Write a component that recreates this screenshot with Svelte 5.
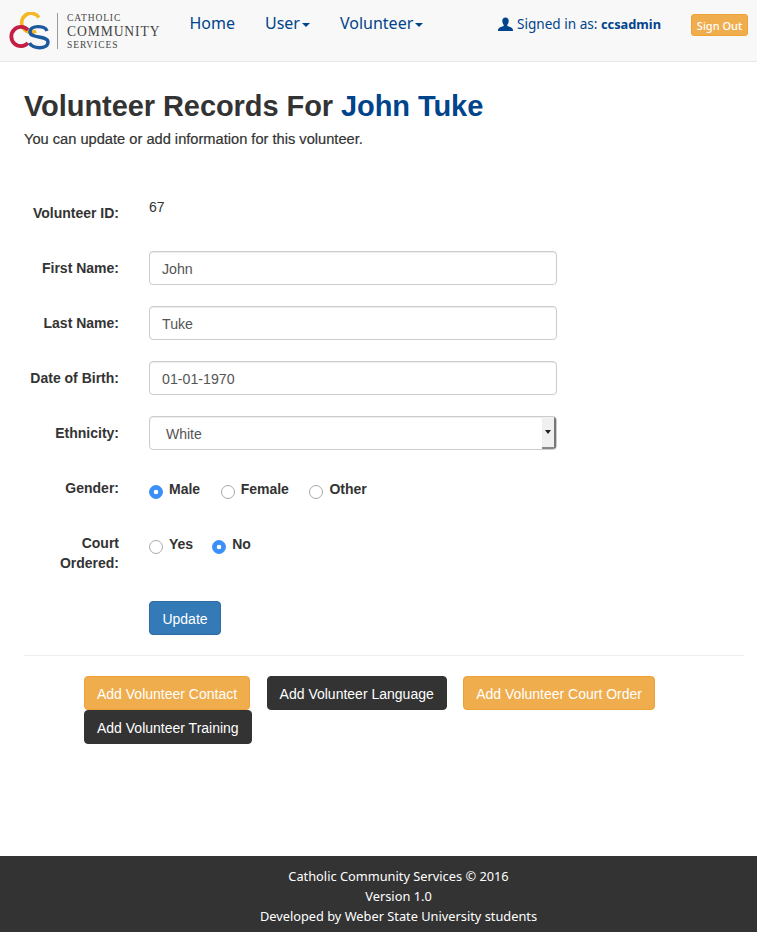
<script>
    const navLinks = [
        { label: "Home", caret: false },
        { label: "User", caret: true },
        { label: "Volunteer", caret: true },
    ];
    const actions = [
        { label: "Add Volunteer Contact", tone: "warn" },
        { label: "Add Volunteer Language", tone: "dark" },
        { label: "Add Volunteer Court Order", tone: "warn" },
        { label: "Add Volunteer Training", tone: "dark" },
    ];
    const textFields = [
        { label: "First Name:", value: "John" },
        { label: "Last Name:", value: "Tuke" },
        { label: "Date of Birth:", value: "01-01-1970" },
    ];
    let gender = $state("Male");
    let court = $state("No");
</script>

<nav class="navbar">
    <a class="brand" href="#/">
        <svg class="mark" width="42" height="38" viewBox="8 12 42 38" aria-hidden="true">
            <path d="M39 17.5A9.5 9.5 0 1 0 36 31" fill="none" stroke="#f5b823" stroke-width="3.6" />
            <path d="M28 30A9.6 9.6 0 1 0 28 43" fill="none" stroke="#c41e45" stroke-width="3.8" />
            <path d="M47 31C45 25 30 25 30 32C30 39 48 35 48 42C48 50 32 49 29.5 43" fill="none" stroke="#1c5a9e" stroke-width="3.4" />
        </svg>
        <span class="rule"></span>
        <span class="wordmark">
            <span class="small">Catholic</span>
            <span class="big">Community</span>
            <span class="small">Services</span>
        </span>
    </a>
    <ul class="links">
        {#each navLinks as link (link.label)}
            <li><a href="#/">{link.label}{#if link.caret}<span class="caret"></span>{/if}</a></li>
        {/each}
    </ul>
    <span class="signed">
        <svg width="15" height="15" viewBox="0 0 15 15" aria-hidden="true">
            <path d="M7.5 0.5C5.3 0.5 4.2 2.2 4.3 4.2C4.4 5.8 5 7 5.7 7.8C5.9 8.5 5.6 9 5 9.3C3.2 10 1 10.6 0.3 12C0 12.8 0 13.5 0 14H15C15 13.5 15 12.8 14.7 12C14 10.6 11.8 10 10 9.3C9.4 9 9.1 8.5 9.3 7.8C10 7 10.6 5.8 10.7 4.2C10.8 2.2 9.7 0.5 7.5 0.5Z" fill="#00448b" />
        </svg>
        <span>Signed in as: <b>ccsadmin</b></span>
    </span>
    <button class="signout">Sign Out</button>
</nav>

<main>
    <h1>Volunteer Records For <span class="who">John Tuke</span></h1>
    <p class="lead">You can update or add information for this volunteer.</p>

    <form class="form" onsubmit={(e) => e.preventDefault()}>
        <div class="row">
            <span class="label">Volunteer ID:</span>
            <span class="static">67</span>
        </div>
        {#each textFields as field (field.label)}
            <div class="row">
                <span class="label">{field.label}</span>
                <input class="control" type="text" value={field.value} />
            </div>
        {/each}
        <div class="row">
            <span class="label">Ethnicity:</span>
            <div class="control select">
                <span>White</span>
                <span class="stepper"><i></i></span>
            </div>
        </div>
        <div class="row">
            <span class="label">Gender:</span>
            <div class="radios">
                {#each ["Male", "Female", "Other"] as opt (opt)}
                    <label><input type="radio" bind:group={gender} value={opt} /><b>{opt}</b></label>
                {/each}
            </div>
        </div>
        <div class="row">
            <span class="label">Court Ordered:</span>
            <div class="radios court">
                {#each ["Yes", "No"] as opt (opt)}
                    <label><input type="radio" bind:group={court} value={opt} /><b>{opt}</b></label>
                {/each}
            </div>
        </div>
        <div class="row submit">
            <span class="label"></span>
            <button class="btn primary">Update</button>
        </div>
    </form>

    <hr />

    <div class="actions">
        {#each actions as action (action.label)}
            <button class="btn {action.tone}">{action.label}</button>
        {/each}
    </div>
</main>

<footer>
    <p>Catholic Community Services © 2016</p>
    <p>Version 1.0</p>
    <p>Developed by Weber State University students</p>
</footer>

<style>
    :global(body) {
        background: #fff;
        color: #333;
        font-family: "Liberation Sans", Arial, sans-serif;
        font-size: 14px;
    }
    .navbar {
        display: flex;
        align-items: flex-start;
        height: 61px;
        background: #f8f8f8;
        border-bottom: 1px solid #e7e7e7;
        font-family: "Noto Sans", sans-serif;
    }
    .brand {
        display: flex;
        align-items: center;
        margin: 12px 0 0 8px;
        height: 38px;
        text-decoration: none;
    }
    .rule {
        width: 1px;
        height: 36px;
        margin-left: 7px;
        background: #999;
    }
    .wordmark {
        display: flex;
        flex-direction: column;
        margin-left: 9px;
        font-family: "Liberation Serif", serif;
        color: #444;
        text-transform: uppercase;
    }
    .small {
        font-size: 9.5px;
        line-height: 12px;
        letter-spacing: 0.9px;
    }
    .big {
        font-size: 13.6px;
        line-height: 15px;
        letter-spacing: 0.9px;
    }
    .links {
        display: flex;
        list-style: none;
        gap: 30px;
        margin: 0 0 0 29px;
        padding: 13px 0 0;
    }
    .links a {
        color: #00448b;
        font-size: 16px;
        line-height: 21px;
        text-decoration: none;
    }
    .caret {
        display: inline-block;
        margin-left: 2px;
        vertical-align: middle;
        border-top: 4px solid #00448b;
        border-left: 4px solid transparent;
        border-right: 4px solid transparent;
    }
    .signed {
        display: flex;
        align-items: center;
        gap: 4px;
        margin: 14px 0 0 auto;
        color: #00448b;
        font-size: 13.6px;
        line-height: 19px;
    }
    .signed b {
        font-size: 12.8px;
    }
    .signout {
        margin: 14px 9px 0 30px;
        height: 22px;
        width: 57px;
        padding: 0;
        background: #f0ad4e;
        border: 1px solid #eea236;
        border-radius: 3px;
        color: #fff;
        font-family: "Noto Sans", sans-serif;
        font-size: 11px;
        font-weight: 500;
    }
    main {
        padding: 0 13px 0 24px;
        height: 794px;
        box-sizing: border-box;
    }
    h1 {
        margin: 0;
        padding-top: 28px;
        font-size: 29px;
        line-height: 33px;
        font-weight: bold;
        letter-spacing: -0.07px;
        color: #333;
    }
    .who {
        color: #00448b;
    }
    .lead {
        margin: 6px 0 0;
        font-size: 14.65px;
        line-height: 20px;
        -webkit-text-stroke: 0.2px #333;
    }
    .form {
        display: flex;
        flex-direction: column;
        gap: 21px;
        margin-top: 47px;
    }
    .row {
        display: flex;
        align-items: flex-start;
        min-height: 34px;
    }
    .label {
        flex: none;
        width: 95px;
        margin-right: 30px;
        padding-top: 7px;
        text-align: right;
        font-weight: bold;
        line-height: 20px;
    }
    .static {
        padding-top: 1px;
        line-height: 20px;
    }
    .control {
        display: flex;
        align-items: center;
        box-sizing: border-box;
        width: 408px;
        height: 34px;
        padding: 7px 12px 5px;
        background: #fff;
        border: 1px solid #ccc;
        border-radius: 4px;
        box-shadow: inset 0 1px 1px rgba(0, 0, 0, 0.075);
        color: #555;
        font-family: "Liberation Sans", Arial, sans-serif;
        font-size: 14.2px;
    }
    .select {
        justify-content: space-between;
        padding: 0 0 0 16px;
        font-size: 14px;
        overflow: hidden;
    }
    .select > span:first-child {
        padding-top: 2px;
    }
    .stepper {
        display: flex;
        align-items: center;
        justify-content: center;
        width: 14px;
        height: 32px;
        background: #f0f0f0;
        border-right: 2px solid #777;
        border-bottom: 2px solid #888;
        box-sizing: border-box;
    }
    .stepper i {
        border-top: 4px solid #222;
        border-left: 3px solid transparent;
        border-right: 3px solid transparent;
    }
    .radios {
        display: flex;
        gap: 20.5px;
        padding-top: 8px;
    }
    .radios.court {
        gap: 19px;
    }
    .radios label {
        display: flex;
        align-items: flex-start;
        gap: 6px;
        line-height: 20px;
    }
    .radios input {
        appearance: none;
        box-sizing: border-box;
        width: 14px;
        height: 14px;
        margin: 6px 0 0;
        background: #fff;
        border: 1px solid #aaa;
        border-radius: 50%;
    }
    .radios input:checked {
        background: radial-gradient(circle, #fff 0 2px, #3a8ffa 2.6px);
        border-color: #3a8ffa;
    }
    .submit {
        margin-top: 7px;
    }
    .btn {
        height: 34px;
        padding: 7px 12px 5px;
        border: 1px solid transparent;
        border-radius: 4px;
        color: #fff;
        font-family: "Liberation Sans", Arial, sans-serif;
        font-size: 14px;
        line-height: 20px;
        white-space: nowrap;
    }
    .primary {
        width: 72px;
        background: #337ab7;
        border-color: #2e6da4;
    }
    .warn {
        background: #f0ad4e;
        border-color: #eea236;
    }
    .dark {
        background: #333;
        border-color: #333;
    }
    hr {
        margin: 20px 0;
        border: 0;
        border-top: 1px solid #eee;
    }
    .actions {
        display: flex;
        flex-wrap: wrap;
        column-gap: 16.5px;
        padding: 0 60px;
    }
    footer {
        background: #333;
        color: #fff;
        height: 76px;
        padding: 10px 0 0 40px;
        box-sizing: border-box;
        text-align: center;
        font-family: "Noto Sans", sans-serif;
        font-size: 12.8px;
        line-height: 20px;
    }
    footer p {
        margin: 0;
    }
</style>
